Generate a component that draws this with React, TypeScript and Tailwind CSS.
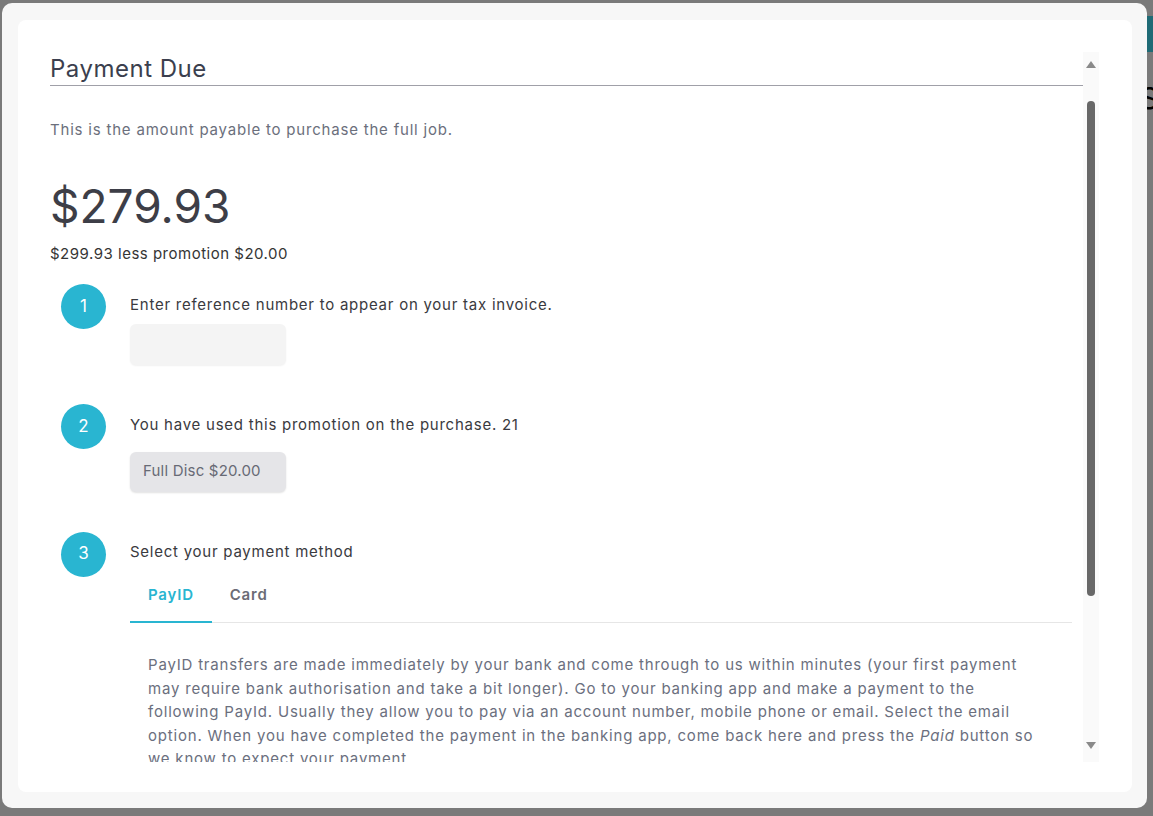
import React from "react";

function Step({ n, children }: { n: number; children: React.ReactNode }) {
  return (
    <div className="flex items-start">
      <div className="ml-[11px] flex h-[45px] w-[45px] shrink-0 items-center justify-center rounded-full bg-[#29b5d1] text-[17px] text-white">
        {n}
      </div>
      <div className="ml-[24px] flex-1 pt-[8.6px]">{children}</div>
    </div>
  );
}

export default function App() {
  const font = { fontFamily: "Inter, 'Noto Sans', sans-serif" };
  return (
    <div className="relative h-[816px] w-[1153px] overflow-hidden bg-[#7a7a7a] pl-[2px] pt-[3px]" style={font}>
      <div className="absolute right-0 top-[16px] h-[36px] w-[6px] bg-[#1f6b76]" />
      <div className="absolute right-[-6px] top-[80px] text-[30px] leading-[36px] text-black">S</div>
      <div className="relative h-[805px] w-[1145px] rounded-[10px] bg-[#f7f7f7] pb-[16px] pl-[16px] pr-[15px] pt-[17px]">
        <div className="flex h-[772px] w-[1114px] rounded-[8px] bg-white pb-[30px] pl-[32px] pr-[33px] pt-[32px]">
          <div className="flex-1 overflow-hidden">
            <div className="border-b border-[#a0a0a8] text-[24px] leading-[33px] tracking-[0.5px] text-[#3b3f4e]">Payment Due</div>
            <div className="mt-[32px] text-[15px] leading-[24px] tracking-[0.8px] text-[#6b6f7c]">
              This is the amount payable to purchase the full job.
            </div>
            <div className="mt-[36px] text-[46px] leading-[56px] text-[#3d3e47]">$279.93</div>
            <div className="mt-[8px] text-[15px] leading-[24px] tracking-[0.5px] text-[#353535]">$299.93 less promotion $20.00</div>

            <div className="mt-[18px]">
              <Step n={1}>
                <div className="text-[15px] leading-[24px] tracking-[0.75px] text-[#3a3a40]">
                  Enter reference number to appear on your tax invoice.
                </div>
                <div className="mt-[7.5px] h-[41px] w-[156px] rounded-[6px] bg-[#f4f4f4] shadow-[0_1px_2px_rgba(0,0,0,0.06)]" />
              </Step>
            </div>

            <div className="mt-[39px]">
              <Step n={2}>
                <div className="text-[15px] leading-[24px] tracking-[0.75px] text-[#3a3a40]">
                  You have used this promotion on the purchase. 21
                </div>
                <div className="mt-[15px] flex h-[40px] w-[156px] items-center rounded-[6px] bg-[#e5e5e8] pl-[13px] text-[15px] tracking-[0.2px] text-[#676a75] shadow-[0_1px_2px_rgba(0,0,0,0.12)]">
                  Full Disc $20.00
                </div>
              </Step>
            </div>

            <div className="mt-[40px]">
              <Step n={3}>
                <div className="text-[15px] leading-[24px] tracking-[0.75px] text-[#3a3a40]">Select your payment method</div>
                <div className="mr-[11px] flex border-b border-[#e6e6e6]">
                  <div className="-mb-px border-b-2 border-[#29b5d1] px-[18px] pb-[13px] pt-[19px] text-[15px] font-semibold leading-[24px] tracking-[0.8px] text-[#29b5d1]">
                    PayID
                  </div>
                  <div className="px-[18px] pb-[15px] pt-[19px] text-[15px] font-semibold leading-[24px] tracking-[0.8px] text-[#6b6c76]">
                    Card
                  </div>
                </div>
                <div className="mt-[30px] px-[18px] text-[15px] leading-[23.5px] tracking-[0.8px] text-[#6b6f7e]">
                  <div className="whitespace-nowrap">PayID transfers are made immediately by your bank and come through to us within minutes (your first payment</div>
                  <div className="whitespace-nowrap">may require bank authorisation and take a bit longer). Go to your banking app and make a payment to the</div>
                  <div className="whitespace-nowrap">following PayId. Usually they allow you to pay via an account number, mobile phone or email. Select the email</div>
                  <div className="whitespace-nowrap">option. When you have completed the payment in the banking app, come back here and press the <i>Paid</i> button so</div>
                  <div className="whitespace-nowrap">we know to expect your payment.</div>
                </div>
              </Step>
            </div>
          </div>
          <div className="relative w-[16px] shrink-0 bg-[#fafafa]">
            <div className="mx-auto mt-[9px] h-0 w-0 border-x-[5px] border-b-[7px] border-x-transparent border-b-[#8a8a8a]" />
            <div className="mx-auto mt-[33px] h-[495px] w-[8px] rounded-full bg-[#686868]" />
            <div className="mx-auto mt-[146px] h-0 w-0 border-x-[5px] border-t-[7px] border-x-transparent border-t-[#8a8a8a]" />
          </div>
        </div>
      </div>
    </div>
  );
}
